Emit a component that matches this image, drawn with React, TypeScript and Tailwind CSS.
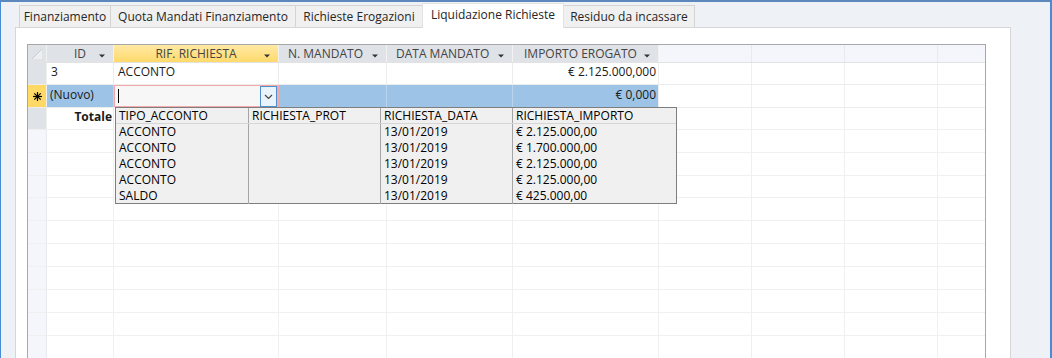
import React from "react";

const font = { fontFamily: '"Open Sans", "Noto Sans", sans-serif' };

const cols = [
  { w: "w-[67px]" },
  { w: "w-[165px]" },
  { w: "w-[108px]" },
  { w: "w-[126px]" },
  { w: "w-[146px]" },
  { w: "w-[93px]" },
  { w: "w-[93px]" },
  { w: "w-[93px]" },
];

function HeadArrow() {
  return (
    <svg width="6" height="4" viewBox="0 0 6 4" className="absolute right-[8px] top-[9px]">
      <path d="M0 0.5 L6 0.5 L3 3.5 Z" fill="#333" />
    </svg>
  );
}

function Tab({ label, w, active, first }: { label: string; w: string; active?: boolean; first?: boolean }) {
  return (
    <div
      className={`${w} ${first ? "" : "-ml-px"} flex items-center justify-center border border-b-0 ${
        active
          ? "h-[25px] bg-white border-[#E3E3E3] relative z-10 -mb-px pb-[3px]"
          : "h-[22px] bg-[#F0F0F0] border-[#D4D4D4]"
      } text-[12px] text-[#262626] leading-none`}
    >
      {label}
    </div>
  );
}

const emptyRowHeights = ["h-[23px]", "h-[23px]", "h-[22px]", "h-[23px]", "h-[23px]", "h-[23px]", "h-[23px]", "h-[23px]", "h-[23px]", "h-[23px]"];

export default function App() {
  return (
    <div
      style={font}
      className="relative w-[1052px] h-[358px] overflow-hidden bg-[#EEF1F6] border-t-2 border-t-[#5C88BE] border-l border-l-[#4A8BD6] border-r-2 border-r-[#4A8BD6] text-[#1a1a1a]"
    >
      {/* tabs */}
      <div className="flex items-end h-[25px] ml-[18px]">
        <Tab label="Finanziamento" w="w-[92px]" first />
        <Tab label="Quota Mandati Finanziamento" w="w-[186px]" />
        <Tab label="Richieste Erogazioni" w="w-[128px]" />
        <Tab label="Liquidazione Richieste" w="w-[142px]" active />
        <Tab label="Residuo da incassare" w="w-[132px]" />
      </div>

      {/* panel */}
      <div className="ml-[14px] w-[996px] h-[400px] bg-white border border-b-0 border-[#D6D6D6]">
        <div className="ml-[11px] mt-[16px] w-[959px] border-l border-t border-r border-[#A8A8A8] text-[12px] leading-none">
          {/* header */}
          <div className="flex h-[18px] border-b border-[#E2E2E2]">
            <div className="relative w-[19px] bg-[#DFE2E7] border-r border-[#F2F2F2]">
              <svg width="12" height="12" viewBox="0 0 12 12" className="absolute left-[3px] top-[3px]">
                <path d="M11 1 L11 11 L1 11 Z" fill="#EDEEF1" />
                <path d="M11 1 L1 11" stroke="#C8CBD1" strokeWidth="1" />
              </svg>
            </div>
            <div className="relative w-[67px] bg-[#DFE2E7] border-r border-[#F2F2F2] flex items-center justify-center text-[#444]">
              ID
              <HeadArrow />
            </div>
            <div className="relative w-[165px] bg-gradient-to-b from-[#FFE9A3] to-[#FFD96A] border-r border-[#F2F2F2] flex items-center justify-center text-[#444]">
              RIF. RICHIESTA
              <HeadArrow />
            </div>
            <div className="relative w-[108px] bg-[#DFE2E7] border-r border-[#F2F2F2] flex items-center pl-[9px] text-[#444]">
              N. MANDATO
              <HeadArrow />
            </div>
            <div className="relative w-[126px] bg-[#DFE2E7] border-r border-[#F2F2F2] flex items-center pl-[9px] text-[#444]">
              DATA MANDATO
              <HeadArrow />
            </div>
            <div className="relative w-[146px] bg-[#DFE2E7] border-r border-[#F2F2F2] flex items-center pl-[11px] text-[#444]">
              IMPORTO EROGATO
              <HeadArrow />
            </div>
            <div className="w-[93px] bg-[#F5F6FC] border-r border-[#E9EAF0]" />
            <div className="w-[93px] bg-[#F5F6FC] border-r border-[#E9EAF0]" />
            <div className="w-[93px] bg-[#F5F6FC] border-r border-[#E9EAF0]" />
            <div className="flex-1 bg-[#F5F6FC]" />
          </div>

          {/* row 1 */}
          <div className="flex h-[22px] border-b border-[#ECECEC]">
            <div className="w-[19px] bg-[#DFE2E7] border-r border-[#F0F0F0]" />
            <div className="w-[67px] border-r border-[#ECECEC] flex items-center pl-[4px] pb-[4px]">3</div>
            <div className="w-[165px] border-r border-[#ECECEC] flex items-center pl-[4px] pb-[4px]">ACCONTO</div>
            <div className="w-[108px] border-r border-[#ECECEC]" />
            <div className="w-[126px] border-r border-[#ECECEC]" />
            <div className="w-[146px] border-r border-[#ECECEC] flex items-center justify-end pr-[2px] pb-[4px]">€ 2.125.000,000</div>
            <div className="w-[93px] border-r border-[#F0F0F0]" />
            <div className="w-[93px] border-r border-[#F0F0F0]" />
            <div className="w-[93px] border-r border-[#F0F0F0]" />
            <div className="flex-1" />
          </div>

          {/* new row */}
          <div className="flex h-[23px] border-b border-[#ECECEC]">
            <div className="w-[19px] bg-[#FFD966] border-r border-[#F0F0F0] flex items-center justify-center">
              <svg width="11" height="11" viewBox="0 0 11 11">
                <g stroke="#000" strokeWidth="1.2">
                  <path d="M5.5 1 L5.5 10" />
                  <path d="M1 5.5 L10 5.5" />
                  <path d="M2.3 2.3 L8.7 8.7" />
                  <path d="M8.7 2.3 L2.3 8.7" />
                </g>
              </svg>
            </div>
            <div className="w-[67px] bg-[#9DC3E6] border-r border-[#B9D4EC] flex items-center pl-[3px] pb-[3px]">(Nuovo)</div>
            <div className="relative w-[165px] bg-[#F7F7F7] border border-[#F3A9A9] border-r-2 flex items-center">
              <div className="ml-[3px] w-px h-[14px] bg-black" />
              <div className="absolute right-0 top-0 w-[17px] h-[21px] border border-[#4F8FC9] bg-[#EAF3FB] flex items-center justify-center">
                <svg width="9" height="6" viewBox="0 0 9 6">
                  <path d="M1 1 L4.5 4.5 L8 1" fill="none" stroke="#444" strokeWidth="1.2" />
                </svg>
              </div>
            </div>
            <div className="w-[108px] bg-[#9DC3E6] border-r border-[#B9D4EC]" />
            <div className="w-[126px] bg-[#9DC3E6] border-r border-[#B9D4EC]" />
            <div className="w-[146px] bg-[#9DC3E6] border-r border-[#ECECEC] flex items-center justify-end pr-[2px] pb-[3px]">€ 0,000</div>
            <div className="w-[93px] border-r border-[#F0F0F0]" />
            <div className="w-[93px] border-r border-[#F0F0F0]" />
            <div className="w-[93px] border-r border-[#F0F0F0]" />
            <div className="flex-1" />
          </div>

          {/* totale row */}
          <div className="flex h-[22px] border-b border-[#F0F0F0]">
            <div className="w-[19px] bg-[#DFE2E7] border-r border-[#F0F0F0]" />
            <div className="w-[67px] border-r border-[#ECECEC] flex items-center justify-end pr-[1px] pb-[4px] font-bold">Totale</div>
            <div className="w-[165px] border-r border-[#F0F0F0]" />
            <div className="w-[108px] border-r border-[#F0F0F0]" />
            <div className="w-[126px] border-r border-[#F0F0F0]" />
            <div className="w-[146px] border-r border-[#F0F0F0]" />
            <div className="w-[93px] border-r border-[#F0F0F0]" />
            <div className="w-[93px] border-r border-[#F0F0F0]" />
            <div className="w-[93px] border-r border-[#F0F0F0]" />
            <div className="flex-1" />
          </div>

          {emptyRowHeights.map((h, i) => (
            <div key={i} className={`flex ${h} border-b border-[#F0F0F0]`}>
              <div className="w-[19px] bg-[#F5F6FC] border-r border-[#E8E9EF]" />
              {cols.map((c, j) => (
                <div key={j} className={`${c.w} border-r border-[#F0F0F0]`} />
              ))}
              <div className="flex-1" />
            </div>
          ))}
        </div>
      </div>

      {/* dropdown list (overlay) */}
      <div className="absolute left-[114px] top-[105px] w-[562px] h-[97px] bg-[#F0F0F0] border border-[#7E7E7E] text-[12px] leading-none text-black z-20">
        <div className="flex h-[16px] border-b border-[#D6D6D6]">
          <div className="w-[133px] border-r border-[#A5A5A5] flex items-center pl-[3px]">TIPO_ACCONTO</div>
          <div className="w-[132px] border-r border-[#A5A5A5] flex items-center pl-[3px]">RICHIESTA_PROT</div>
          <div className="w-[132px] border-r border-[#A5A5A5] flex items-center pl-[3px]">RICHIESTA_DATA</div>
          <div className="flex-1 flex items-center pl-[3px]">RICHIESTA_IMPORTO</div>
        </div>
        {[
          ["ACCONTO", "13/01/2019", "€ 2.125.000,00"],
          ["ACCONTO", "13/01/2019", "€ 1.700.000,00"],
          ["ACCONTO", "13/01/2019", "€ 2.125.000,00"],
          ["ACCONTO", "13/01/2019", "€ 2.125.000,00"],
          ["SALDO", "13/01/2019", "€ 425.000,00"],
        ].map((r, i) => (
          <div key={i} className="flex h-[16px]">
            <div className="w-[133px] border-r border-[#A5A5A5] flex items-center pl-[3px]">{r[0]}</div>
            <div className="w-[132px] border-r border-[#A5A5A5]" />
            <div className="w-[132px] border-r border-[#A5A5A5] flex items-center pl-[3px]">{r[1]}</div>
            <div className="flex-1 flex items-center pl-[3px]">{r[2]}</div>
          </div>
        ))}
      </div>
    </div>
  );
}
